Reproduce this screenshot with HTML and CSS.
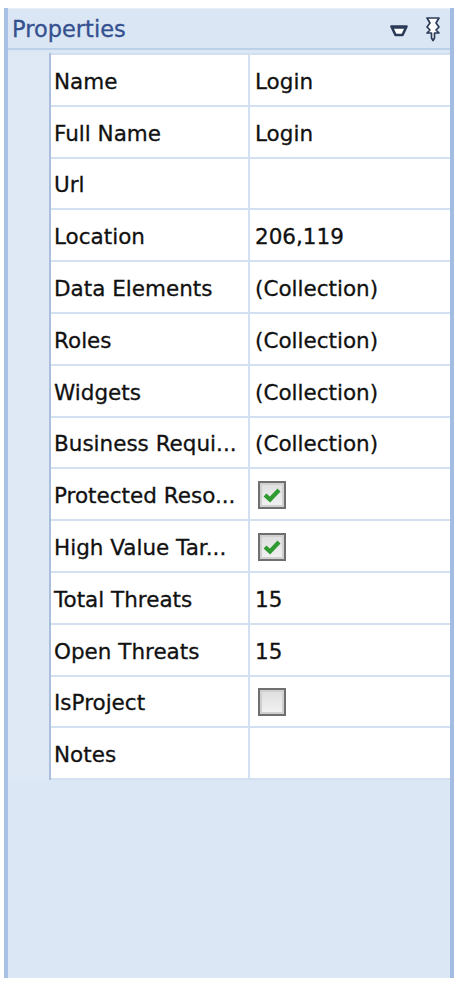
FILE: index.html
```html
<!DOCTYPE html>
<html>
	<head>
		<title>Properties</title>
		<meta charset="utf-8"/>
		<link rel="stylesheet" href="styles.css">
	</head>
	<body>
		<div id="panel">
			<div class="header">
				<span class="title">Properties</span>
				<span class="tools">
					<svg class="drop" width="18" height="12" viewBox="0 0 18 12">
						<path d="M1.5 1.5 H16.5 L12.5 10 H5.5 Z" fill="#ffffff" stroke="#2b3b57" stroke-width="2.6" stroke-linejoin="round"/>
						<path d="M2 2.5 H16" stroke="#2b3b57" stroke-width="2.5"/>
					</svg>
					<svg class="pin" width="16" height="26" viewBox="0 0 16 26">
						<path d="M2 2 H14 L11 7 L14 11 L11 14 L14 17 H9.5 V22 L8 24.5 L6.5 22 V17 H2 L5 14 L2 11 L5 7 Z" fill="#ffffff" stroke="#2b3b57" stroke-width="1.7" stroke-linejoin="round"/>
					</svg>
				</span>
			</div>
			<div class="body">
				<div class="gutter"></div>
				<div class="grid">
					<div class="row"><div class="key">Name</div><div class="val">Login</div></div>
					<div class="row"><div class="key">Full Name</div><div class="val">Login</div></div>
					<div class="row"><div class="key">Url</div><div class="val"></div></div>
					<div class="row"><div class="key">Location</div><div class="val">206,119</div></div>
					<div class="row"><div class="key">Data Elements</div><div class="val">(Collection)</div></div>
					<div class="row"><div class="key">Roles</div><div class="val">(Collection)</div></div>
					<div class="row"><div class="key">Widgets</div><div class="val">(Collection)</div></div>
					<div class="row"><div class="key">Business Requi...</div><div class="val">(Collection)</div></div>
					<div class="row"><div class="key">Protected Reso...</div><div class="val"><span class="check"><svg width="20" height="16" viewBox="0 0 20 16"><path d="M3 8 L8 12.5 L17 3" fill="none" stroke="#2f9a2f" stroke-width="4.2"/></svg></span></div></div>
					<div class="row"><div class="key">High Value Tar...</div><div class="val"><span class="check"><svg width="20" height="16" viewBox="0 0 20 16"><path d="M3 8 L8 12.5 L17 3" fill="none" stroke="#2f9a2f" stroke-width="4.2"/></svg></span></div></div>
					<div class="row"><div class="key">Total Threats</div><div class="val">15</div></div>
					<div class="row"><div class="key">Open Threats</div><div class="val">15</div></div>
					<div class="row"><div class="key">IsProject</div><div class="val"><span class="check"></span></div></div>
					<div class="row"><div class="key">Notes</div><div class="val"></div></div>
				</div>
			</div>
		</div>
	</body>
</html>
```

FILE: styles.css
```css
html { width:100%; height:100%; }
body {
	margin:0px;
	background:#ffffff;
	font-family:"DejaVu Sans", sans-serif;
	color:#111111;
}

#panel {
	margin:8px 3px 0 4px;
	height:970px;
	background:#dce7f5;
	border-left:4px solid #a9c2e3;
	border-right:4px solid #a2bde1;
	box-sizing:border-box;
	display:flex;
	flex-direction:column;
}

.header {
	height:39px;
	display:flex;
	align-items:center;
	justify-content:space-between;
	padding:0 9px 0 4px;
	border-top:1px solid #e8eff9;
	border-bottom:2px solid #bcd0ea;
	background:#dbe6f4;
}
.title {
	color:#34508f;
	font-size:22.5px;
	-webkit-text-stroke:0.3px #34508f;
}
.tools {
	display:flex;
	align-items:center;
	gap:17px;
}
.drop { margin-top:4px; }

.body {
	display:flex;
	margin-top:3px;
}
.gutter {
	width:41px;
	background:#dfe9f6;
	border-right:2px solid #a9bfdc;
}
.grid {
	flex:1;
	background:#ffffff;
	border-top:2px solid #d3e0f1;
}
.row {
	display:flex;
	height:49.8px;
	border-bottom:2px solid #d3e0f1;
	font-size:21.5px;
	-webkit-text-stroke:0.3px #111111;
}
.key {
	width:199px;
	box-sizing:border-box;
	padding:3px 0 0 3px;
	display:flex;
	align-items:center;
	border-right:2px solid #d3e0f1;
	white-space:nowrap;
}
.val {
	flex:1;
	padding:3px 0 0 5px;
	display:flex;
	align-items:center;
}

.check {
	width:24px;
	height:24px;
	border:2px solid #6f6f6f;
	background:linear-gradient(#dedede, #f2f2f2);
	box-shadow:inset 0 0 0 2px #d0d0d0;
	display:flex;
	align-items:center;
	justify-content:center;
	margin:-2px 0 0 3px;
}
```
